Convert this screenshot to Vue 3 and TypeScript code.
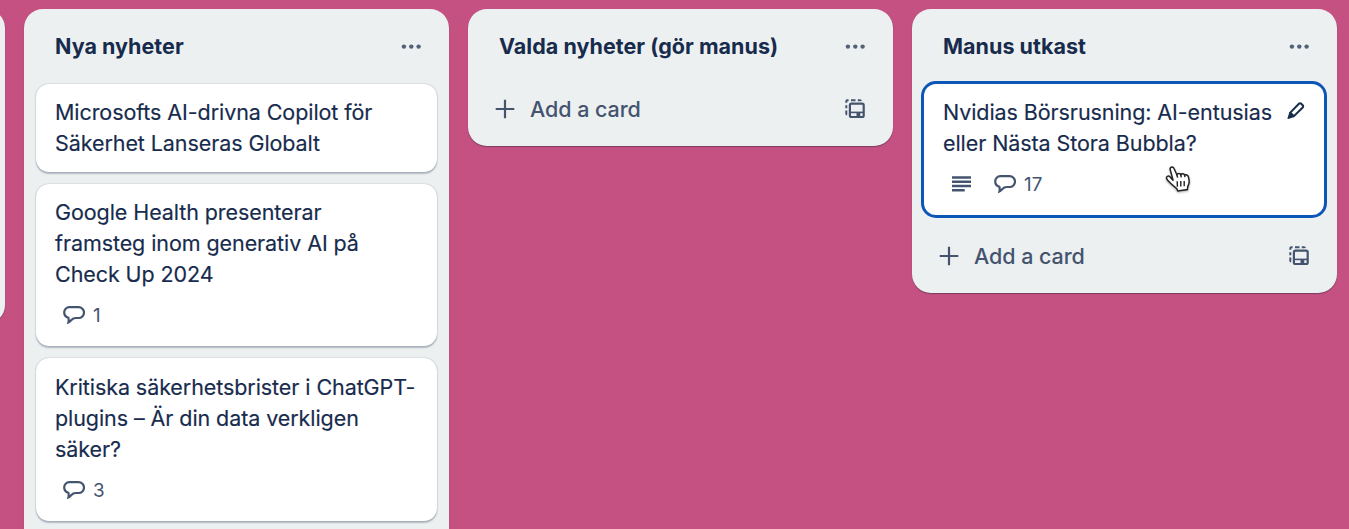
<script setup lang="ts">
interface Card {
  lines: string[]
  comments?: number
  description?: boolean
  active?: boolean
}
interface List {
  title: string
  cards: Card[]
  addable: boolean
}

const lists: List[] = [
  {
    title: 'Nya nyheter',
    addable: false,
    cards: [
      { lines: ['Microsofts AI-drivna Copilot för', 'Säkerhet Lanseras Globalt'] },
      { lines: ['Google Health presenterar', 'framsteg inom generativ AI på', 'Check Up 2024'], comments: 1 },
      { lines: ['Kritiska säkerhetsbrister i ChatGPT-', 'plugins – Är din data verkligen', 'säker?'], comments: 3 },
    ],
  },
  { title: 'Valda nyheter (gör manus)', addable: true, cards: [] },
  {
    title: 'Manus utkast',
    addable: true,
    cards: [
      {
        lines: ['Nvidias Börsrusning: AI-entusias', 'eller Nästa Stora Bubbla?'],
        comments: 17,
        description: true,
        active: true,
      },
    ],
  },
]
</script>

<template>
  <main class="board">
    <section class="list previous"></section>
    <section v-for="list in lists" :key="list.title" class="list" :class="{ tall: !list.addable }">
      <header class="list-head">
        <h2>{{ list.title }}</h2>
        <svg class="dots" width="20" height="6" viewBox="0 0 20 6">
          <circle cx="2.9" cy="2.6" r="2.2" /><circle cx="10.3" cy="2.6" r="2.2" /><circle cx="17.6" cy="2.6" r="2.2" />
        </svg>
      </header>
      <div v-if="list.cards.length" class="cards">
        <article v-for="card in list.cards" :key="card.lines[0]" class="card" :class="{ active: card.active }">
          <p class="title">
            <span v-for="line in card.lines" :key="line">{{ line }}</span>
          </p>
          <div v-if="card.comments" class="badges">
            <svg v-if="card.description" class="desc" width="19" height="16" viewBox="0 0 19 16">
              <path d="M0 1.5h19M0 5.7h19M0 10h19M0 14.3h12.7" />
            </svg>
            <svg class="bubble" width="22" height="18" viewBox="0 0 22 18">
              <path d="M6.3 1.2h9.3a5.2 5.2 0 0 1 0 10.8h-3c-2 0-3 .7-4.2 2-1 1.2-1.8 2.1-3 2.5.4-1.3.3-3.2 0-4.7C2.8 11.1 1.2 9.2 1.2 6.3A5.1 5.1 0 0 1 6.3 1.2z" />
            </svg>
            <span class="count">{{ card.comments }}</span>
          </div>
          <svg v-if="card.active" class="pencil" width="20" height="20" viewBox="0 0 20 20">
            <path d="M4.3 11.6 12.9 2.7a1.6 1.6 0 0 1 2.3 0l1.5 1.5a1.6 1.6 0 0 1 0 2.3L7.9 15.2z" />
            <path class="tip" d="M3.4 11.2 1.5 17.2q-.2.9.7.7l6-1.9z" />
          </svg>
          <svg v-if="card.active" class="cursor" width="28" height="30" viewBox="0 0 28 30">
            <path class="hand" d="M9.2 16.6 6.2 5.6C5.6 3.2 8.8 2 9.9 4.3l3 6.4c.8-1.8 3.3-1.6 3.9.1.9-1.5 3.2-1.2 3.8.4 1.3-1 3.4-.2 3.8 1.6l.7 3.6c.6 2.9-.8 4.5-1.4 6.3l-.3 2.8-9.6 1.5-1-2.4-5.7-4.8c-1.8-1.5-3.8-3.2-4.5-5.3-.7-2.1 1.600-3.200 3.300-1.700z" />
            <path class="crease" d="M12.900 10.700l.7 3M16.800 10.800l.5 2.500M20.600 11.200l.4 2M13.200 17.300l.2 5.400M16.800 17.100v5.400M20.200 17v5.200" />
          </svg>
        </article>
      </div>
      <footer v-if="list.addable" class="add">
        <svg class="plus" width="20" height="20" viewBox="0 0 20 20"><path d="M10 .7v18.600M.7 10h18.600" /></svg>
        <span>Add a card</span>
        <svg class="template" width="20" height="20" viewBox="0 0 20 20">
          <path class="dash" d="M1.300 3.800V2.200q0-1 1-1h1.300M6 1.200h4.500M12.800 1.200h2.100q.9 0 1 .9M1.300 6.200v3M1.300 11.600v3q0 .9.900 1" />
          <rect x="4.900" y="4.700" width="13.800" height="13.300" rx="1.500" />
          <path class="divider" d="M4.900 13.400h13.800" />
          <path class="block" d="M11.500 13.500h3.800v3.800h-3.800z" />
        </svg>
      </footer>
    </section>
  </main>
</template>

<style>
body {
  margin: 0;
  overflow: hidden;
}
</style>

<style scoped>
.board {
  box-sizing: border-box;
  display: flex;
  align-items: flex-start;
  gap: 19px;
  width: 1349px;
  height: 529px;
  padding-top: 9px;
  overflow: hidden;
  background: #c55082;
  color: #172b4d;
  font-family: Inter, "Liberation Sans", sans-serif;
}
.list {
  box-sizing: border-box;
  flex: none;
  width: 425px;
  padding-bottom: 12px;
  border-radius: 19px;
  background: #edf0f0;
  box-shadow: 0 1px 1px #4a344f99;
}
.list.previous {
  height: 315px;
  margin-left: -420px;
}
.list.tall {
  height: 560px;
}
.list-head {
  display: flex;
  align-items: center;
  justify-content: space-between;
  height: 75px;
  padding: 0 28px 0 31px;
}
h2 {
  margin: 0;
  font-size: 21.5px;
  font-weight: 650;
  letter-spacing: 0.03px;
  line-height: 31px;
  white-space: nowrap;
}
.dots {
  fill: #536178;
}
.cards {
  display: flex;
  flex-direction: column;
  gap: 12px;
  padding: 0 12px;
}
.card {
  box-sizing: border-box;
  position: relative;
  padding: 12.5px 19px;
  border-radius: 13px;
  background: #fff;
  box-shadow: 0 1.5px 1.5px #091e4240, 0 0 1.5px #091e424f;
}
.card:not(.active) {
  margin-right: 0.5px;
}
.card.active {
  height: 131px;
  margin-right: 1px;
  border-radius: 12px;
  box-shadow: 0 0 0 3px #0c56b8;
}
.card + .card {
  padding-top: 13.2px;
  padding-bottom: 12px;
}
.title {
  margin: 0;
  font-size: 21.5px;
  letter-spacing: -0.08px;
  line-height: 31.25px;
  white-space: nowrap;
  -webkit-text-stroke: 0.15px #172b4d;
}
.title span {
  display: block;
}
.badges {
  display: flex;
  align-items: center;
  height: 38px;
  padding: 6px 0 0 8px;
  color: #44546f;
}
.badges svg,
.plus,
.template {
  fill: none;
  stroke: #44546f;
  stroke-width: 2.2;
}
.badges .desc {
  margin: 0 23px 0 1px;
  stroke-width: 2.5;
}
.count {
  margin-left: 8px;
  font-size: 18.8px;
}
.pencil {
  position: absolute;
  top: 17px;
  right: 18px;
  fill: none;
  stroke: #172b4d;
  stroke-width: 2;
}
.pencil .tip {
  fill: #172b4d;
  stroke: none;
}
.cursor {
  position: absolute;
  top: 80px;
  left: 240px;
  filter: drop-shadow(0 1px 1px #0005);
}
.hand {
  fill: #fff;
  stroke: #222;
  stroke-width: 1.5;
}
.crease {
  fill: none;
  stroke: #222;
  stroke-width: 1.4;
}
.add {
  display: flex;
  align-items: center;
  height: 50px;
  padding: 0 28px 0 27px;
  color: #44546f;
  font-size: 21.5px;
  font-weight: 500;
  letter-spacing: -0.05px;
}
.cards + .add {
  margin-top: 16px;
}
.add span {
  margin-left: 15px;
}
.template {
  margin-left: auto;
}
.template .dash {
  stroke-width: 2;
}
.template .divider {
  stroke-width: 1.6;
}
.template .block {
  fill: #44546f;
  stroke: none;
}
</style>
